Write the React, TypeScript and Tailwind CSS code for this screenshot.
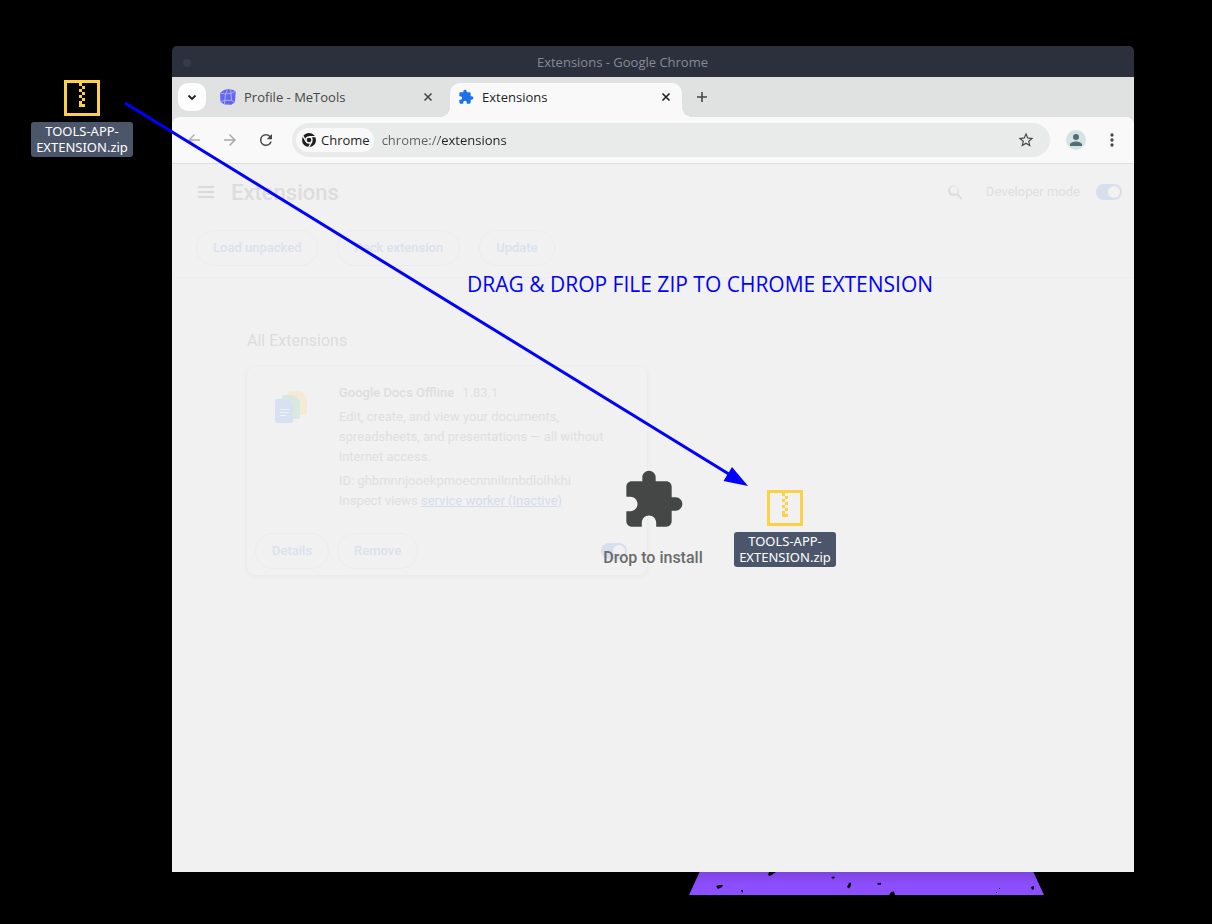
import { useState } from "react";
import type { ReactNode } from "react";
import { clsx } from "clsx";

const PUZZLE =
  "M20.5 11H19V7c0-1.1-.9-2-2-2h-4V3.5C13 2.12 11.88 1 10.5 1S8 2.12 8 3.5V5H4c-1.1 0-1.99.9-1.99 2v3.8H3.5c1.49 0 2.7 1.21 2.7 2.7s-1.21 2.7-2.7 2.7H2V20c0 1.1.9 2 2 2h3.8v-1.5c0-1.49 1.21-2.7 2.7-2.7 1.49 0 2.7 1.21 2.7 2.7V22H17c1.1 0 2-.9 2-2v-4h1.5c1.38 0 2.5-1.12 2.5-2.5S21.88 11 20.5 11z";

const Glyph = ({ d, className }: { d: string; className?: string }) => (
  <svg viewBox="0 0 24 24" fill="currentColor" className={clsx("shrink-0", className)} aria-hidden="true">
    <path d={d} />
  </svg>
);

const IconButton = ({
  label,
  className,
  children,
}: {
  label: string;
  className?: string;
  children: ReactNode;
}) => (
  <button
    type="button"
    aria-label={label}
    className={clsx("flex shrink-0 items-center justify-center rounded-full", className)}
  >
    {children}
  </button>
);

const MeToolsIcon = () => (
  <svg viewBox="0 0 16 16" className="size-4 shrink-0" aria-hidden="true">
    <path d="M4 1 8 0l5.500 1 2.200 1.500-.7 10.500-3.500 2.700-7-.2L.5 13 0 4z" fill="#6366f1" />
    <path
      d="M.5 4.200 5.500 5 11 4.300 15 2.500M5.500 5l-.7 6.500M11 4.300l.5 7M4.800 11.500l6.700-.2M.5 12.500l4.300-1-.3 4M11.500 11.300l3 1.700M7.500.5l-2 4.500M11 4.300 10.500.5"
      fill="none"
      stroke="#c9cbf2"
      strokeWidth=".7"
    />
  </svg>
);

const ChromeIcon = () => (
  <svg viewBox="0 0 16 16" className="size-4 shrink-0" aria-hidden="true">
    <circle cx="8" cy="8" r="7" fill="#1f1f1f" />
    <circle cx="8" cy="8" r="3" fill="none" stroke="#f9f9f9" strokeWidth="1.400" />
    <path d="M8 4.700h6.500M5.200 9.700 2 4.200M10.800 9.700 7.700 15" stroke="#f9f9f9" strokeWidth="1.300" />
  </svg>
);

const DocsIcon = () => (
  <svg viewBox="0 0 32 32" className="size-8 shrink-0" aria-hidden="true">
    <path d="M15 0h11l6 6v16a2 2 0 0 1-2 2H15a2 2 0 0 1-2-2V2a2 2 0 0 1 2-2z" fill="#f3ebd5" />
    <path d="M9 4h10l6 6v16a2 2 0 0 1-2 2H9a2 2 0 0 1-2-2V6a2 2 0 0 1 2-2z" fill="#d9e9df" />
    <path d="M2 8h10l6 6v16a2 2 0 0 1-2 2H2a2 2 0 0 1-2-2V10a2 2 0 0 1 2-2z" fill="#d8e1f1" />
    <path d="M5 18.500h9M5 21.500h9M5 24.500h6" stroke="#eef1f6" strokeWidth="1.200" />
  </svg>
);

const ZipFile = ({ className }: { className: string }) => (
  <figure className={clsx("absolute flex w-[102px] flex-col items-center gap-1.5", className)}>
    <svg viewBox="0 0 12 12" className="size-9" shapeRendering="crispEdges" aria-hidden="true">
      <path d="M0 0h12v12H0zM1 1v10h10V1z" fillRule="evenodd" fill="#fcd147" />
      <path d="M5 1h1v1H5zM6 2h1v1H6zM5 3h1v1H5zM6 4h1v1H6zM5 5h1v1H5zM6 6h1v1H6zM5 7h1v1h1v1H5z" fill="#fcd147" />
    </svg>
    <figcaption className="w-full rounded-[3px] bg-[#4c566a] pt-px pb-0.5 text-center font-['Noto_Sans',sans-serif] text-[13px] leading-4 text-white">
      TOOLS-APP-
      <br />
      EXTENSION.zip
    </figcaption>
  </figure>
);

const Tab = ({
  title,
  icon,
  active = false,
  className,
}: {
  title: string;
  icon: ReactNode;
  active?: boolean;
  className: string;
}) => (
  <div
    className={clsx(
      "relative flex h-[34px] shrink-0 items-center pb-1.5",
      active
        ? "rounded-t-[10px] bg-[#f9f9f9] text-[#1f1f1f] before:absolute before:bottom-0 before:-left-2.5 before:size-2.5 before:bg-[radial-gradient(circle_at_0_0,transparent_10px,#f9f9f9_10px)] after:absolute after:-right-2.5 after:bottom-0 after:size-2.5 after:bg-[radial-gradient(circle_at_100%_0,transparent_10px,#f9f9f9_10px)]"
        : "text-[#474747]",
      className,
    )}
  >
    <button type="button" role="tab" aria-selected={active} className="flex flex-1 items-center gap-2 text-left text-[13px]">
      {icon}
      <span className="pt-px">{title}</span>
    </button>
    <IconButton label={`Close ${title}`} className="size-4">
      <svg viewBox="0 0 16 16" className="size-4" aria-hidden="true">
        <path d="m4.500 4.500 7 7m0-7-7 7" stroke="currentColor" strokeWidth="1.600" />
      </svg>
    </IconButton>
  </div>
);

const Toggle = ({ label, className }: { label: string; className?: string }) => {
  const [on, setOn] = useState(true);
  return (
    <input
      type="checkbox"
      aria-label={label}
      checked={on}
      onChange={() => setOn(!on)}
      className={clsx(
        "relative h-4 w-[26px] shrink-0 appearance-none rounded-full bg-[#e3e3e3] before:absolute before:top-0.5 before:left-0.5 before:size-3 before:rounded-full before:bg-[#f1f1f1] checked:bg-[#d7deec] checked:before:left-3",
        className,
      )}
    />
  );
};

const PillButton = ({ children }: { children: ReactNode }) => (
  <button
    type="button"
    className="h-9 rounded-full border border-[#e9ecf2] px-4 text-[13px] font-medium text-[#dbe2ee]"
  >
    {children}
  </button>
);

const TabStrip = () => (
  <div role="tablist" className="flex h-10 items-start bg-[#e0e2e1] px-1.5 pt-1.5 text-[#1f1f1f]">
    <button
      type="button"
      aria-label="Search tabs"
      className="flex size-7 shrink-0 items-center justify-center rounded-[10px] bg-[#fdfdfd]"
    >
      <svg viewBox="0 0 16 16" className="size-4" aria-hidden="true">
        <path d="m4.500 6.500 3.500 3.500 3.500-3.500" fill="none" stroke="currentColor" strokeWidth="1.800" />
      </svg>
    </button>
    <Tab title="Profile - MeTools" icon={<MeToolsIcon />} className="ml-3.5 w-[230px] pr-3.5" />
    <Tab
      title="Extensions"
      active
      icon={<Glyph d={PUZZLE} className="size-4 text-[#1a73e8]" />}
      className="w-[232px] px-2"
    />
    <IconButton label="New tab" className="ml-1.5 size-7">
      <svg viewBox="0 0 16 16" className="size-4 text-[#474747]" aria-hidden="true">
        <path d="M8 3v10M3 8h10" stroke="currentColor" strokeWidth="1.600" />
      </svg>
    </IconButton>
  </div>
);

const Toolbar = () => (
  <div className="bg-[#e0e2e1]">
    <div className="flex h-[47px] items-center rounded-t-lg border-b border-[#dedfdf] bg-[#f9f9f9] px-2 text-[#474747]">
      <IconButton label="Back" className="size-7 text-[#b0b0b0]">
        <Glyph d="M20 11H7.830l5.590-5.590L12 4l-8 8 8 8 1.410-1.410L7.830 13H20z" className="size-[18px]" />
      </IconButton>
      <IconButton label="Forward" className="ml-2 size-7 text-[#a9a9a9]">
        <Glyph d="m12 4-1.410 1.410L16.170 11H4v2h12.170l-5.580 5.590L12 20l8-8z" className="size-[18px]" />
      </IconButton>
      <IconButton label="Reload" className="ml-2 size-7">
        <Glyph
          d="M17.650 6.350A7.960 7.960 0 0 0 12 4a8 8 0 1 0 7.730 10h-2.080A6 6 0 1 1 12 6c1.660 0 3.140.69 4.220 1.780L13 11h7V4z"
          className="size-[18px]"
        />
      </IconButton>
      <div className="ml-3 flex h-[34px] flex-1 items-center rounded-full bg-[#e9ebea] px-1">
        <span className="flex h-6 items-center gap-1 rounded-full bg-[#f9f9f9] pr-1 pl-[5px] text-[13px] text-[#1f1f1f]">
          <ChromeIcon />
          <span className="pt-px">Chrome</span>
        </span>
        <input
          type="text"
          aria-label="Address"
          defaultValue="chrome://extensions"
          className="ml-2 min-w-0 flex-1 bg-[linear-gradient(to_right,#5c5f5e_58px,#1f1f1f_58px)] bg-clip-text pt-px text-[13px] text-transparent outline-none"
        />
        <IconButton label="Bookmark this page" className="mr-1.5 size-7">
          <Glyph
            d="m22 9.240-7.190-.62L12 2 9.190 8.630 2 9.240l5.460 4.730L5.820 21 12 17.270 18.180 21l-1.630-7.030zM12 15.400l-3.760 2.270 1-4.280-3.320-2.880 4.380-.38L12 6.100l1.710 4.040 4.380.38-3.320 2.880 1 4.280z"
            className="size-[18px]"
          />
        </IconButton>
      </div>
      <IconButton label="You" className="ml-4 size-5 bg-[#d6e3e5] text-[#4f6f75]">
        <Glyph
          d="M12 12a4 4 0 1 0 0-8 4 4 0 0 0 0 8zm0 2c-2.670 0-8 1.340-8 4v2h16v-2c0-2.660-5.330-4-8-4z"
          className="size-[18px]"
        />
      </IconButton>
      <IconButton label="Customize and control" className="ml-3 size-7">
        <Glyph
          d="M12 8a2 2 0 1 0 0-4 2 2 0 0 0 0 4zm0 2a2 2 0 1 0 0 4 2 2 0 0 0 0-4zm0 6a2 2 0 1 0 0 4 2 2 0 0 0 0-4z"
          className="size-5"
        />
      </IconButton>
    </div>
  </div>
);

const ExtensionCard = () => (
  <article className="flex h-[208px] flex-col rounded-lg pt-4 shadow-[0_1px_4px_1px_#e9e9e9]">
    <div className="flex">
      <div className="w-[92px] shrink-0 pt-2 pl-7">
        <DocsIcon />
      </div>
      <div className="text-[13px] leading-5 text-[#e0e0e0]">
        <h3 className="flex gap-2 font-medium text-[#dedede]">
          Google Docs Offline <span className="font-normal text-[#e2e2e2]">1.83.1</span>
        </h3>
        <p className="mt-1 w-[280px]">
          Edit, create, and view your documents, spreadsheets, and presentations — all without internet access.
        </p>
        <p className="mt-1">ID: ghbmnnjooekpmoecnnnilnnbdlolhkhi</p>
        <p>
          Inspect views{" "}
          <a href="#service-worker" className="text-[#d5ddec] underline">
            service worker (Inactive)
          </a>
        </p>
      </div>
    </div>
    <div className="mt-auto flex items-center gap-2 pr-5 pb-1.5 pl-2">
      <PillButton>Details</PillButton>
      <PillButton>Remove</PillButton>
      <Toggle label="Google Docs Offline enabled" className="ml-auto" />
    </div>
  </article>
);

const ExtensionsPage = () => (
  <main className="relative flex-1 bg-[#f1f1f1] font-['Roboto',sans-serif]">
    <header className="flex h-14 items-center pr-3 pl-[22px]">
      <IconButton label="Main menu" className="size-6 text-[#dadada]">
        <svg viewBox="0 0 16 12" className="h-3 w-4" shapeRendering="crispEdges" aria-hidden="true">
          <path d="M0 0h16v2H0zM0 5h16v2H0zM0 10h16v2H0z" fill="currentColor" />
        </svg>
      </IconButton>
      <h1 className="ml-[13px] text-[22px] font-medium text-[#dddddd]">Extensions</h1>
      <IconButton label="Search extensions" className="ml-auto size-5 text-[#dedede]">
        <Glyph
          d="M15.500 14h-.79l-.28-.27A6.500 6.500 0 1 0 13 15.500l.27.28v.79l5 4.990L19.490 20zm-6 0a4.500 4.500 0 1 1 0-9 4.500 4.500 0 0 1 0 9z"
          className="size-5"
        />
      </IconButton>
      <label className="ml-5 flex items-center gap-4 text-[13px] text-[#dfdfdf]">
        Developer mode
        <Toggle label="Developer mode" />
      </label>
    </header>
    <div className="flex gap-[19px] border-b border-[#ededed] px-6 pt-2.5 pb-[11px]">
      <PillButton>Load unpacked</PillButton>
      <PillButton>Pack extension</PillButton>
      <PillButton>Update</PillButton>
    </div>
    <section className="mx-auto max-w-[812px] pt-[51px]">
      <h2 className="text-base leading-6 text-[#dddddd]">All Extensions</h2>
      <div className="mt-3.5 grid grid-cols-2 gap-3">
        <ExtensionCard />
      </div>
    </section>
    <div className="absolute inset-0 flex flex-col items-center justify-center gap-4">
      <Glyph d={PUZZLE} className="size-16 text-[#444746]" />
      <p className="text-base leading-5 font-medium text-[#6b6b6b]">Drop to install</p>
    </div>
  </main>
);

// Torn purple strip of the wallpaper that shows under the window
const WallpaperStrip = () => (
  <svg viewBox="0 0 356 24" className="absolute top-[871px] left-[689px] h-6 w-[356px]" aria-hidden="true">
    <defs>
      <linearGradient id="strip" x1="0" y1="0" x2="0" y2="1">
        <stop offset="0" stopColor="#7b43dd" />
        <stop offset=".6" stopColor="#8c4fff" />
      </linearGradient>
    </defs>
    <path d="M11 0h333l11 24H0z" fill="url(#strip)" />
    <path
      d="M79 4 80 1h7l-3 2-3 2zM27 15l3-1 4 0-1 2-4 2zM52 19l2 0v3l-2-2zM142 6l3-.5 1 1-2 1.500zM158 16l2-4 2-.5 0 3-2 3zM188 12l4-.3v2l-3 0zM200 24l2-3 3-.5 1 3.500zM342 16l3-1 0 3-2 1zM307 21l1 0v1l-1 0zM310 17h1v1h-1z"
      fill="#000"
    />
  </svg>
);

export default function App() {
  return (
    <div className="relative flex min-h-screen overflow-hidden bg-black pt-[46px] pr-[78px] pb-[52px] pl-[172px] font-['Open_Sans',sans-serif]">
      <WallpaperStrip />
      <div className="relative flex flex-1 flex-col overflow-hidden rounded-t-[5px]">
        <div className="relative flex h-[31px] items-center justify-center bg-[#2b303c] pt-0.5 pr-[61px] text-[13px] text-[#868b95]">
          <span className="absolute left-[11px] size-2 rounded-full bg-[#363c4a]" />
          Extensions - Google Chrome
        </div>
        <TabStrip />
        <Toolbar />
        <ExtensionsPage />
      </div>

      <ZipFile className="top-20 left-[31px]" />
      <ZipFile className="top-[490px] left-[734px]" />
      <svg viewBox="0 0 640 400" className="pointer-events-none absolute top-[100px] left-[120px] h-[400px] w-[640px]" aria-hidden="true">
        <path d="m5 3 607 373" stroke="#0000ff" strokeWidth="3" />
        <path d="m628 386-16-19-8.500 14z" fill="#0000ff" />
      </svg>
      <p className="absolute top-[270px] left-[467px] text-[21px] leading-7 whitespace-nowrap text-[#0000ff]">
        DRAG &amp; DROP FILE ZIP TO CHROME EXTENSION
      </p>
    </div>
  );
}
